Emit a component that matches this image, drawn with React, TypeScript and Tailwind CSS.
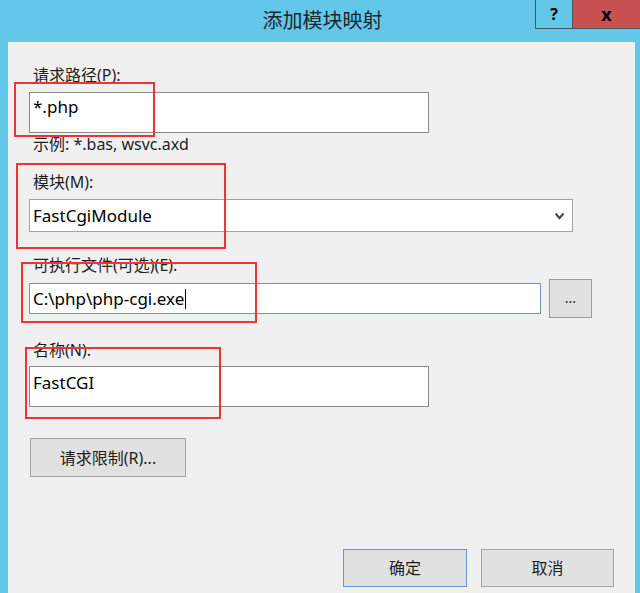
import React from "react";

const font = { fontFamily: '"Noto Sans", "Noto Sans CJK SC", sans-serif' };

function Label({ children, className = "" }: { children: React.ReactNode; className?: string }) {
  return <div className={`text-[16px] leading-[20px] text-[#1e1e1e] ${className}`}>{children}</div>;
}

export default function App() {
  return (
    <div
      className="relative w-[640px] h-[593px] overflow-hidden bg-[#63c7e9] flex flex-col"
      style={font}
    >
      {/* title bar */}
      <div className="h-[42px] flex items-start shrink-0">
        <div className="flex-1 pl-[110px] pt-[7px] text-center text-[20px] leading-[28px] text-[#1b2830]">
          添加模块映射
        </div>
        <div className="flex">
          <div className="w-[38px] h-[29px] border-x border-b border-[#48585f] flex items-center justify-center text-[16px] font-bold text-black">
            ?
          </div>
          <div className="w-[67px] h-[29px] bg-[#c75050] border-b border-[#48585f] flex items-center justify-center text-[18px] font-bold text-black">
            x
          </div>
        </div>
      </div>

      {/* dialog body */}
      <div className="flex-1 ml-[8px] mr-[5px] bg-[#f0f0f0] pl-[21px] pr-[21px] pt-[23px] flex flex-col">
        <Label className="ml-[4px]">请求路径(P):</Label>
        <div className="mt-[7px] w-[400px] h-[41px] bg-white border border-[#8a8a8a] pl-[3px] pt-[4px] text-[17px] leading-[20px] text-black">
          *.php
        </div>
        <Label className="mt-[1px] ml-[4px]">示例: *.bas, wsvc.axd</Label>

        <Label className="mt-[18px] ml-[4px]">模块(M):</Label>
        <div className="mt-[7px] w-[544px] h-[33px] bg-white border border-[#a3a3a3] pl-[3px] pr-[7px] flex items-center justify-between text-[17px] text-black">
          <span>FastCgiModule</span>
          <svg width="11" height="8" viewBox="0 0 11 8">
            <polyline points="1.5,1.5 5.5,6 9.5,1.5" fill="none" stroke="#4a4a4a" strokeWidth="2.2" />
          </svg>
        </div>

        <Label className="mt-[23px] ml-[4px]">可执行文件(可选)(E):</Label>
        <div className="mt-[4px] flex items-center gap-[8px]">
          <div className="w-[512px] h-[31px] bg-white border border-[#7393c0] pl-[3px] flex items-center text-[17px] text-black">
            <span>C:\php\php-cgi.exe</span>
            <span className="w-px h-[20px] bg-black ml-[1px]" />
          </div>
          <div className="w-[43px] h-[39px] bg-[#e1e1e1] border border-[#9a9a9a] flex items-center justify-center text-[14px] leading-none text-[#1e1e1e] pb-[2px]">
            ...
          </div>
        </div>

        <Label className="mt-[22px] ml-[4px]">名称(N):</Label>
        <div className="mt-[6px] w-[400px] h-[41px] bg-white border border-[#8a8a8a] pl-[3px] pt-[6px] text-[17px] leading-[20px] text-black">
          FastCGI
        </div>

        <div className="mt-[31px] ml-[1px] w-[156px] h-[39px] bg-[#e1e1e1] border border-[#a3a3a3] flex items-center justify-center text-[16px] text-[#1e1e1e]">
          请求限制(R)...
        </div>

        <div className="mt-[72px] flex justify-end gap-[14px]">
          <div className="w-[124px] h-[38px] bg-[#e1e1e1] border border-[#5f9ad3] flex items-center justify-center text-[16px] text-[#1e1e1e]">
            确定
          </div>
          <div className="w-[133px] h-[38px] bg-[#e1e1e1] border border-[#a3a3a3] flex items-center justify-center text-[16px] text-[#1e1e1e]">
            取消
          </div>
        </div>
      </div>

      {/* red annotation boxes drawn over the dialog */}
      <div className="absolute left-[14px] top-[82px] w-[141px] h-[55px] border-2 border-[#ee3434]" />
      <div className="absolute left-[16px] top-[163px] w-[210px] h-[86px] border-2 border-[#ee3434]" />
      <div className="absolute left-[21px] top-[262px] w-[236px] h-[61px] border-2 border-[#ee3434]" />
      <div className="absolute left-[25px] top-[347px] w-[196px] h-[72px] border-2 border-[#ee3434]" />
    </div>
  );
}
